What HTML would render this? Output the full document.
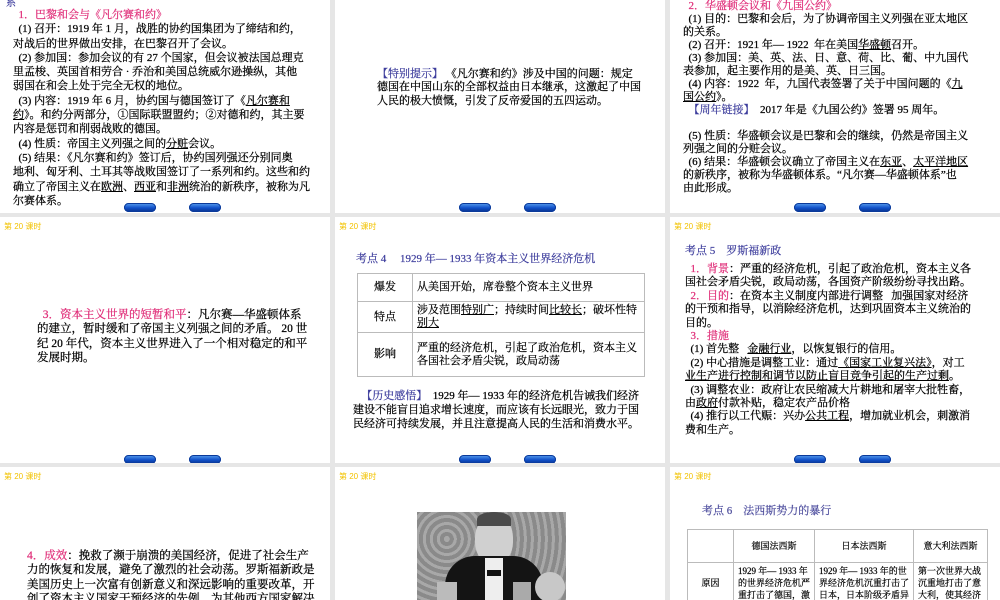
<!DOCTYPE html>
<html><head><meta charset="utf-8">
<style>
*{margin:0;padding:0;box-sizing:border-box}
body{width:1000px;height:600px;background:#e6e6e6;position:relative;overflow:hidden;font-family:"Liberation Serif","Noto Serif CJK SC","Noto Sans CJK SC",serif;color:#000}
.p{position:absolute;background:#fff;overflow:hidden}
.t{position:absolute;white-space:nowrap;font-size:11.5px;line-height:14.6px;-webkit-text-stroke:0.25px #000}
.hd{position:absolute;left:4px;top:4px;font-size:8px;color:#f2c200;font-family:"Liberation Sans","Noto Sans CJK SC",sans-serif}
.pk{color:#e0307a;-webkit-text-stroke:0.25px #e0307a}
.bl{color:#3c3c9c;-webkit-text-stroke:0.2px #3c3c9c}
.u{text-decoration:underline}
.btn{position:absolute;width:32px;height:9px;border-radius:5px;background:linear-gradient(#5aa0f0,#1050c8 55%,#08308a);box-shadow:0 0 0 1px #0b3a9a inset}
table{border-collapse:collapse;position:absolute}
td{border:1px solid #bbb;font-size:11px;line-height:13px;padding:2px 4px;-webkit-text-stroke:0.2px #000}
</style></head><body>

<div class="p" style="left:0;top:0;width:330px;height:213px">
  <div class="t bl" style="left:6px;top:-3px;font-size:10px">系</div>
  <div class="t" style="left:13px;top:8px;line-height:14.3px;font-size:11px">
  <span class="pk">&nbsp;&nbsp;1．巴黎和会与《凡尔赛和约》</span><br>
  &nbsp;&nbsp;(1) 召开：1919 年 1 月，战胜的协约国集团为了缔结和约，<br>
  对战后的世界做出安排，在巴黎召开了会议。<br>
  &nbsp;&nbsp;(2) 参加国：参加会议的有 27 个国家，但会议被法国总理克<br>
  里孟梭、英国首相劳合 · 乔治和美国总统威尔逊操纵，其他<br>
  弱国在和会上处于完全无权的地位。<br>
  &nbsp;&nbsp;(3) 内容：1919 年 6 月，协约国与德国签订了《<span class="u">凡尔赛和</span><br>
  <span class="u">约</span>》。和约分两部分，①国际联盟盟约；②对德和约，其主要<br>
  内容是惩罚和削弱战败的德国。<br>
  &nbsp;&nbsp;(4) 性质：帝国主义列强之间的<span class="u">分赃</span>会议。<br>
  &nbsp;&nbsp;(5) 结果：《凡尔赛和约》签订后，协约国列强还分别同奥<br>
  地利、匈牙利、土耳其等战败国签订了一系列和约。这些和约<br>
  确立了帝国主义在<span class="u">欧洲</span>、<span class="u">西亚</span>和<span class="u">非洲</span>统治的新秩序，被称为凡<br>
  尔赛体系。</div>
  <div class="btn" style="left:124px;top:203px"></div><div class="btn" style="left:189px;top:203px"></div>
</div>

<div class="p" style="left:335px;top:0;width:330px;height:213px">
  <div class="t" style="left:42px;top:68px;font-size:11px;line-height:13.3px">
  <span class="bl">【特别提示】</span>&nbsp;《凡尔赛和约》涉及中国的问题：规定<br>
  德国在中国山东的全部权益由日本继承，这激起了中国<br>
  人民的极大愤慨，引发了反帝爱国的五四运动。</div>
  <div class="btn" style="left:124px;top:203px"></div><div class="btn" style="left:189px;top:203px"></div>
</div>

<div class="p" style="left:670px;top:0;width:330px;height:213px">
  <div class="t" style="left:13px;top:0px;font-size:11px;line-height:13px">
  <span class="pk">&nbsp;&nbsp;2．华盛顿会议和《九国公约》</span><br>
  &nbsp;&nbsp;(1) 目的：巴黎和会后，为了协调帝国主义列强在亚太地区<br>
  的关系。<br>
  &nbsp;&nbsp;(2) 召开：1921 年— 1922&nbsp; 年在美国<span class="u">华盛顿</span>召开。<br>
  &nbsp;&nbsp;(3) 参加国：美、英、法、日、意、荷、比、葡、中九国代<br>
  表参加，起主要作用的是美、英、日三国。<br>
  &nbsp;&nbsp;(4) 内容：1922&nbsp; 年，九国代表签署了关于中国问题的《<span class="u">九</span><br>
  <span class="u">国公约</span>》。<br>
  &nbsp;&nbsp;<span class="bl">【周年链接】</span>&nbsp; 2017 年是《九国公约》签署 95 周年。<br>
  <br>
  &nbsp;&nbsp;(5) 性质：华盛顿会议是巴黎和会的继续，仍然是帝国主义<br>
  列强之间的分赃会议。<br>
  &nbsp;&nbsp;(6) 结果：华盛顿会议确立了帝国主义在<span class="u">东亚</span>、<span class="u">太平洋地区</span><br>
  的新秩序，被称为华盛顿体系。“凡尔赛—华盛顿体系”也<br>
  由此形成。</div>
  <div class="btn" style="left:124px;top:203px"></div><div class="btn" style="left:189px;top:203px"></div>
</div>

<div class="p" style="left:0;top:217px;width:330px;height:246px">
  <div class="hd">第 20 课时</div>
  <div class="t" style="left:37px;top:91px;font-size:11.5px;line-height:14.3px">
  &nbsp;&nbsp;<span class="pk">3．资本主义世界的短暂和平</span>：凡尔赛—华盛顿体系<br>
  的建立，暂时缓和了帝国主义列强之间的矛盾。 20 世<br>
  纪 20 年代，资本主义世界进入了一个相对稳定的和平<br>
  发展时期。</div>
  <div class="btn" style="left:124px;top:238px"></div><div class="btn" style="left:189px;top:238px"></div>
</div>

<div class="p" style="left:335px;top:217px;width:330px;height:246px">
  <div class="hd">第 20 课时</div>
  <div class="t bl" style="left:21px;top:35px;font-size:11px">考点 4&nbsp;&nbsp;&nbsp;&nbsp; 1929 年— 1933 年资本主义世界经济危机</div>
  <table style="left:22px;top:56px;width:288px">
    <tr style="height:28px"><td style="width:55px;text-align:center">爆发</td><td>从美国开始，席卷整个资本主义世界</td></tr>
    <tr style="height:31px"><td style="text-align:center">特点</td><td>涉及范围<span class="u">特别广</span>；持续时间<span class="u">比较长</span>；破坏性特<br><span class="u">别大</span></td></tr>
    <tr style="height:44px"><td style="text-align:center">影响</td><td>严重的经济危机，引起了政治危机，资本主义<br>各国社会矛盾尖锐，政局动荡</td></tr>
  </table>
  <div class="t" style="left:18px;top:172px;font-size:11px;line-height:14px">
  &nbsp;&nbsp;&nbsp;<span class="bl">【历史感悟】</span>&nbsp; 1929 年— 1933 年的经济危机告诫我们经济<br>
  建设不能盲目追求增长速度，而应该有长远眼光，致力于国<br>
  民经济可持续发展，并且注意提高人民的生活和消费水平。</div>
  <div class="btn" style="left:124px;top:238px"></div><div class="btn" style="left:189px;top:238px"></div>
</div>

<div class="p" style="left:670px;top:217px;width:330px;height:246px">
  <div class="hd">第 20 课时</div>
  <div class="t bl" style="left:15px;top:27px;font-size:11px">考点 5&nbsp;&nbsp;&nbsp; 罗斯福新政</div>
  <div class="t" style="left:15px;top:46px;font-size:11px;line-height:13.4px">
  &nbsp;&nbsp;<span class="pk">1．背景</span>：严重的经济危机，引起了政治危机，资本主义各<br>
  国社会矛盾尖锐，政局动荡，各国资产阶级纷纷寻找出路。<br>
  &nbsp;&nbsp;<span class="pk">2．目的</span>：在资本主义制度内部进行调整&nbsp;&nbsp; 加强国家对经济<br>
  的干预和指导，以消除经济危机，达到巩固资本主义统治的<br>
  目的。<br>
  &nbsp;&nbsp;<span class="pk">3．措施</span><br>
  &nbsp;&nbsp;(1) 首先整&nbsp;&nbsp; <span class="u">金融行业</span>，以恢复银行的信用。<br>
  &nbsp;&nbsp;(2) 中心措施是调整工业：通过<span class="u">《国家工业复兴法》</span>，对工<br>
  <span class="u">业生产进行控制和调节以防止盲目竞争引起的生产过剩</span>。<br>
  &nbsp;&nbsp;(3) 调整农业：政府让农民缩减大片耕地和屠宰大批牲畜，<br>
  由<span class="u">政府</span>付款补贴，稳定农产品价格<br>
  &nbsp;&nbsp;(4) 推行以工代赈：兴办<span class="u">公共工程</span>，增加就业机会，刺激消<br>
  费和生产。</div>
  <div class="btn" style="left:124px;top:238px"></div><div class="btn" style="left:189px;top:238px"></div>
</div>

<div class="p" style="left:0;top:467px;width:330px;height:133px">
  <div class="hd">第 20 课时</div>
  <div class="t" style="left:27px;top:82px;font-size:11.5px;line-height:14.4px">
  <span class="pk">4．成效</span>：挽救了濒于崩溃的美国经济，促进了社会生产<br>
  力的恢复和发展，避免了激烈的社会动荡。罗斯福新政是<br>
  美国历史上一次富有创新意义和深远影响的重要改革，开<br>
  创了资本主义国家干预经济的先例，为其他西方国家解决</div>
</div>

<div class="p" style="left:335px;top:467px;width:330px;height:133px">
  <div class="hd">第 20 课时</div>
  <div style="position:absolute;left:82px;top:45px;width:149px;height:90px;background:repeating-radial-gradient(circle at 20% 30%,#a8a8a8 0 3px,#8a8a8a 3px 7px);overflow:hidden">
    <div style="position:absolute;left:58px;top:4px;width:38px;height:48px;border-radius:45%;background:#d0d0d0"></div>
    <div style="position:absolute;left:60px;top:0;width:34px;height:14px;border-radius:50% 50% 0 0;background:#4a4a4a"></div>
    <div style="position:absolute;left:28px;top:44px;width:98px;height:50px;border-radius:30px 30px 0 0;background:#141414"></div>
    <div style="position:absolute;left:68px;top:46px;width:18px;height:44px;background:#eee"></div>
    <div style="position:absolute;left:70px;top:58px;width:14px;height:6px;background:#111"></div>
    <div style="position:absolute;left:20px;top:70px;width:20px;height:24px;background:#bbb"></div>
    <div style="position:absolute;left:96px;top:70px;width:18px;height:24px;background:#aaa"></div>
    <div style="position:absolute;left:118px;top:60px;width:30px;height:30px;border-radius:50%;background:#c8c8c8"></div>
  </div>
</div>

<div class="p" style="left:670px;top:467px;width:330px;height:133px">
  <div class="hd">第 20 课时</div>
  <div class="t bl" style="left:32px;top:37px;font-size:11px;color:#55559a">考点 6&nbsp;&nbsp;&nbsp; 法西斯势力的暴行</div>
  <table style="left:17px;top:62px;width:301px">
    <tr style="height:33px"><td style="width:46px"></td><td style="width:81px;text-align:center;font-size:9px">德国法西斯</td><td style="width:99px;text-align:center;font-size:9px">日本法西斯</td><td style="text-align:center;font-size:9px">意大利法西斯</td></tr>
    <tr><td style="text-align:center;font-size:9px">原因</td><td style="font-size:9px;line-height:12px">1929 年— 1933 年<br>的世界经济危机严<br>重打击了德国，激</td><td style="font-size:9px;line-height:12px">1929 年— 1933 年的世<br>界经济危机沉重打击了<br>日本，日本阶级矛盾异</td><td style="font-size:9px;line-height:12px">第一次世界大战<br>沉重地打击了意<br>大利，使其经济</td></tr>
  </table>
</div>

</body></html>
